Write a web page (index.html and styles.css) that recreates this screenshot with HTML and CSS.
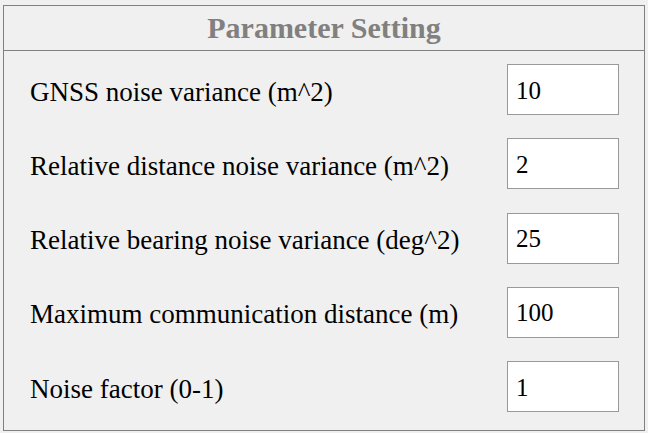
FILE: index.html
```html
<!DOCTYPE html>
<html>
<head>
<meta charset="utf-8">
<link rel="stylesheet" href="styles.css">
</head>
<body>
<div class="panel">
  <div class="panel-header">Parameter Setting</div>
  <div class="panel-body">
    <div class="row"><span class="label">GNSS noise variance (m^2)</span><input class="field" type="text" value="10"></div>
    <div class="row"><span class="label">Relative distance noise variance (m^2)</span><input class="field" type="text" value="2"></div>
    <div class="row"><span class="label">Relative bearing noise variance (deg^2)</span><input class="field" type="text" value="25"></div>
    <div class="row"><span class="label">Maximum communication distance (m)</span><input class="field" type="text" value="100"></div>
    <div class="row"><span class="label">Noise factor (0-1)</span><input class="field" type="text" value="1"></div>
  </div>
</div>
</body>
</html>
```
FILE: styles.css
```css
html, body {
  margin: 0;
  padding: 0;
  background: #f0f0f0;
}
body {
  padding: 5px 3px 0 3px;
  font-family: "Liberation Serif", "Times New Roman", serif;
}
.panel {
  width: 642px;
  height: 426px;
  box-sizing: border-box;
  border: 1px solid #808080;
  background: #f0f0f0;
  display: flex;
  flex-direction: column;
}
.panel-header {
  height: 44px;
  border-bottom: 1px solid #808080;
  display: flex;
  align-items: center;
  justify-content: center;
  font-size: 30px;
  font-weight: bold;
  color: #808080;
}
.panel-body {
  flex: 1;
  padding: 13px 25px 18px 26px;
  display: flex;
  flex-direction: column;
  justify-content: space-between;
}
.row {
  display: flex;
  align-items: center;
  justify-content: space-between;
  height: 51px;
}
.label {
  font-size: 27px;
  color: #000;
  padding-top: 5px;
}
.field {
  width: 112px;
  height: 51px;
  box-sizing: border-box;
  border: 1px solid #999;
  background: #fff;
  padding: 2px 0 0 8px;
  margin: 0;
  font-family: "Liberation Serif", "Times New Roman", serif;
  font-size: 25px;
  color: #000;
  outline: none;
}
```
